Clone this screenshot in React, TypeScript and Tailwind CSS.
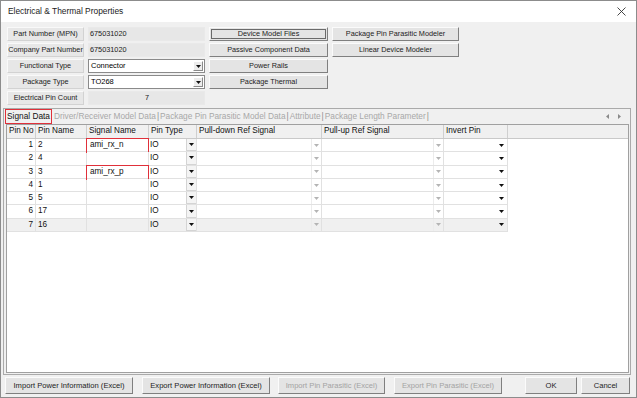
const rows = [
  { no: 1, name: '2', signal: 'ami_rx_n' },
  { no: 2, name: '4', signal: '' },
  { no: 3, name: '3', signal: 'ami_rx_p' },
  { no: 4, name: '1', signal: '' },
  { no: 5, name: '5', signal: '' },
  { no: 6, name: '17', signal: '' },
  { no: 7, name: '16', signal: '' },
]

const cols = [
  { title: 'Pin No', w: 'w-[29px]' },
  { title: 'Pin Name', w: 'w-[51px]' },
  { title: 'Signal Name', w: 'w-[62px]' },
  { title: 'Pin Type', w: 'w-[48px]' },
  { title: 'Pull-down Ref Signal', w: 'w-[125px]' },
  { title: 'Pull-up Ref Signal', w: 'w-[122px]' },
  { title: 'Invert Pin', w: 'w-[64px]' },
]

function Tri({ light = false }: { light?: boolean }) {
  return (
    <svg width="5" height="3" viewBox="0 0 5 3">
      <path d="M0 0h5L2.5 3z" fill={light ? '#b4b4b4' : '#111'} />
    </svg>
  )
}

function Btn({
  children,
  className = '',
  focus = false,
  disabled = false,
}: {
  children: React.ReactNode
  className?: string
  focus?: boolean
  disabled?: boolean
}) {
  return (
    <div
      className={`flex shrink-0 items-center justify-center border border-t-[#fbfbfb] border-l-[#fbfbfb] border-r-[#7f7f7f] border-b-[#7f7f7f] bg-[#e4e4e4] p-[1px] ${className} ${disabled ? 'text-[#a3a3a3]' : 'text-[#1c1c1c]'}`}
    >
      <span
        className={`flex h-full w-full items-center justify-center ${focus ? 'border border-[#6a6a6a]' : ''}`}
      >
        {children}
      </span>
    </div>
  )
}

function Label({ children }: { children: React.ReactNode }) {
  return (
    <div className="flex items-center justify-center border border-t-[#f9f9f9] border-l-[#f9f9f9] border-r-[#d2d2d2] border-b-[#d2d2d2] bg-[#e7e7e7] text-[7.3px] text-[#222]">
      {children}
    </div>
  )
}

function Value({ children, center = false }: { children?: React.ReactNode; center?: boolean }) {
  return (
    <div
      className={`flex items-start border border-[#e9e9e9] bg-[#e7e7e7] pl-[1px] pt-[1px] text-[7.3px] ${center ? 'justify-center' : ''}`}
    >
      {children}
    </div>
  )
}

function Combo({ children }: { children: React.ReactNode }) {
  return (
    <div className="flex items-stretch border border-[#8a8a8a] bg-white text-[7.5px]">
      <span className="flex flex-1 items-center pl-[2px] text-black">{children}</span>
      <span className="my-[1px] mr-[1px] flex w-[10px] items-center justify-center border border-t-[#fff] border-l-[#fff] border-r-[#8a8a8a] border-b-[#8a8a8a] bg-[#ececec]">
        <Tri />
      </span>
    </div>
  )
}

export default function App() {
  return (
    <div className="flex h-[398px] w-[637px] flex-col overflow-hidden border border-[#8c8c8c] bg-[#f0f0f0] font-['Liberation_Sans',Arial,sans-serif] text-[#1a1a1a]">
      {/* title bar */}
      <div className="flex h-[21px] shrink-0 items-center justify-between bg-white pl-[7px] pr-[10px]">
        <span className="text-[8.4px] text-[#1b1b1b]">Electrical &amp; Thermal Properties</span>
        <svg width="9" height="9" viewBox="0 0 9 9">
          <path d="M0.5 0.5l8 8M8.5 0.5l-8 8" stroke="#333" strokeWidth="0.9" />
        </svg>
      </div>

      {/* header fields */}
      <div className="h-[86px] shrink-0 pl-[6px] pt-[5px]">
        <div className="grid grid-cols-[77px_117px_119px_127px] grid-rows-[14px_14px_14px_14px_14px] gap-x-[4px] gap-y-[2px]">
          <Label>Part Number (MPN)</Label>
          <Value>675031020</Value>
          <Btn focus className="text-[7.3px]">Device Model Files</Btn>
          <Btn className="text-[7.3px]">Package Pin Parasitic Modeler</Btn>

          <Label>Company Part Number</Label>
          <Value>675031020</Value>
          <Btn className="text-[7.3px]">Passive Component Data</Btn>
          <Btn className="text-[7.3px]">Linear Device Modeler</Btn>

          <Label>Functional Type</Label>
          <Combo>Connector</Combo>
          <Btn className="text-[7.3px]">Power Rails</Btn>
          <div />

          <Label>Package Type</Label>
          <Combo>TO268</Combo>
          <Btn className="text-[7.3px]">Package Thermal</Btn>
          <div />

          <Label>Electrical Pin Count</Label>
          <Value center>7</Value>
          <div />
          <div />
        </div>
      </div>

      {/* multipage */}
      <div className="ml-[2px] flex h-[267px] w-[628px] shrink-0 flex-col border border-[#aaaaaa]">
        <div className="flex h-[15px] shrink-0 items-center pl-[1px] text-[8.3px] text-[#a8a8a8]">
          <span className="flex h-[15px] w-[47px] items-center justify-center border-[1.5px] border-[#e0303a] text-[#111]">
            Signal Data
          </span>
          <span className="ml-[2px]">Driver/Receiver Model Data</span>
          <span className="mx-[1px] text-[#8c8c8c]">|</span>
          <span>Package Pin Parasitic Model Data</span>
          <span className="mx-[1px] text-[#8c8c8c]">|</span>
          <span>Attribute</span>
          <span className="mx-[1px] text-[#8c8c8c]">|</span>
          <span>Package Length Parameter</span>
          <span className="mx-[1px] text-[#8c8c8c]">|</span>
          <span className="ml-auto mr-[9px] flex items-center gap-[9px]">
            <svg width="3" height="5" viewBox="0 0 3 5">
              <path d="M3 0v5L0 2.5z" fill="#8a8a8a" />
            </svg>
            <svg width="3" height="5" viewBox="0 0 3 5">
              <path d="M0 0v5L3 2.5z" fill="#8a8a8a" />
            </svg>
          </span>
        </div>

        <div className="mb-[1px] ml-[2px] mr-[1px] flex flex-1 flex-col border border-[#a0a0a0] bg-white text-[8.2px] text-[#111]">
          {/* column headers */}
          <div className="flex h-[14px] shrink-0 border-b border-[#c9c9c9] bg-[#f0f0f0]">
            {cols.map((c) => (
              <div key={c.title} className={`${c.w} flex items-center border-r border-[#cfcfcf] pl-[2px]`}>
                {c.title}
              </div>
            ))}
          </div>

          {rows.map((r) => {
            const bg = r.no === 7 ? 'bg-[#f0f0f0]' : 'bg-white'
            return (
              <div key={r.no} className="flex h-[13.3px] shrink-0">
                <div className={`flex w-[29px] items-center justify-end border-b border-r border-[#e1e1e1] pr-[2px] ${bg}`}>
                  {r.no}
                </div>
                <div className={`flex w-[51px] items-center border-b border-r border-[#e1e1e1] pl-[2px] ${bg}`}>
                  {r.name}
                </div>
                <div className={`relative flex w-[62px] items-center border-b border-r border-[#e1e1e1] pl-[3px] ${bg}`}>
                  {r.signal}
                  {r.signal && (
                    <span className="absolute -left-[1px] -right-[1px] -top-[1px] bottom-[-2px] border-[1.5px] border-[#e0303a]" />
                  )}
                </div>
                <div className={`flex w-[48px] items-center border-b border-r border-[#e1e1e1] pl-[1px] ${bg}`}>
                  <span className="flex-1">IO</span>
                  <span className="flex h-full w-[10px] items-center justify-center border-l border-b border-[#d4d4d4] bg-[#f4f4f4]">
                    <Tri />
                  </span>
                </div>
                <div className={`flex w-[125px] items-center justify-end border-b border-r border-[#e1e1e1] ${bg}`}>
                  <span className="flex h-full w-[10px] items-center justify-center border-l border-[#ececec]">
                    <Tri light />
                  </span>
                </div>
                <div className={`flex w-[122px] items-center justify-end border-b border-r border-[#e1e1e1] ${bg}`}>
                  <span className="flex h-full w-[10px] items-center justify-center border-l border-[#ececec]">
                    <Tri light />
                  </span>
                </div>
                <div className={`flex w-[64px] items-center justify-end border-b border-r border-[#e1e1e1] pr-[1px] ${bg}`}>
                  <span className="flex h-full w-[10px] items-center justify-center">
                    <Tri />
                  </span>
                </div>
              </div>
            )
          })}
        </div>
      </div>

      {/* bottom buttons */}
      <div className="flex flex-1 items-start pl-[4px] pt-[2px] text-[7.6px]">
        <Btn className="h-[17px] w-[128px]">Import Power Information (Excel)</Btn>
        <Btn className="ml-[9px] h-[17px] w-[128px]">Export Power Information (Excel)</Btn>
        <Btn disabled className="ml-[8px] h-[17px] w-[107px]">Import Pin Parasitic (Excel)</Btn>
        <Btn disabled className="ml-[9px] h-[17px] w-[108px]">Export Pin Parasitic (Excel)</Btn>
        <Btn className="ml-[23px] h-[17px] w-[52px]">OK</Btn>
        <Btn className="ml-[4px] h-[17px] w-[49px]">Cancel</Btn>
      </div>
    </div>
  )
}
